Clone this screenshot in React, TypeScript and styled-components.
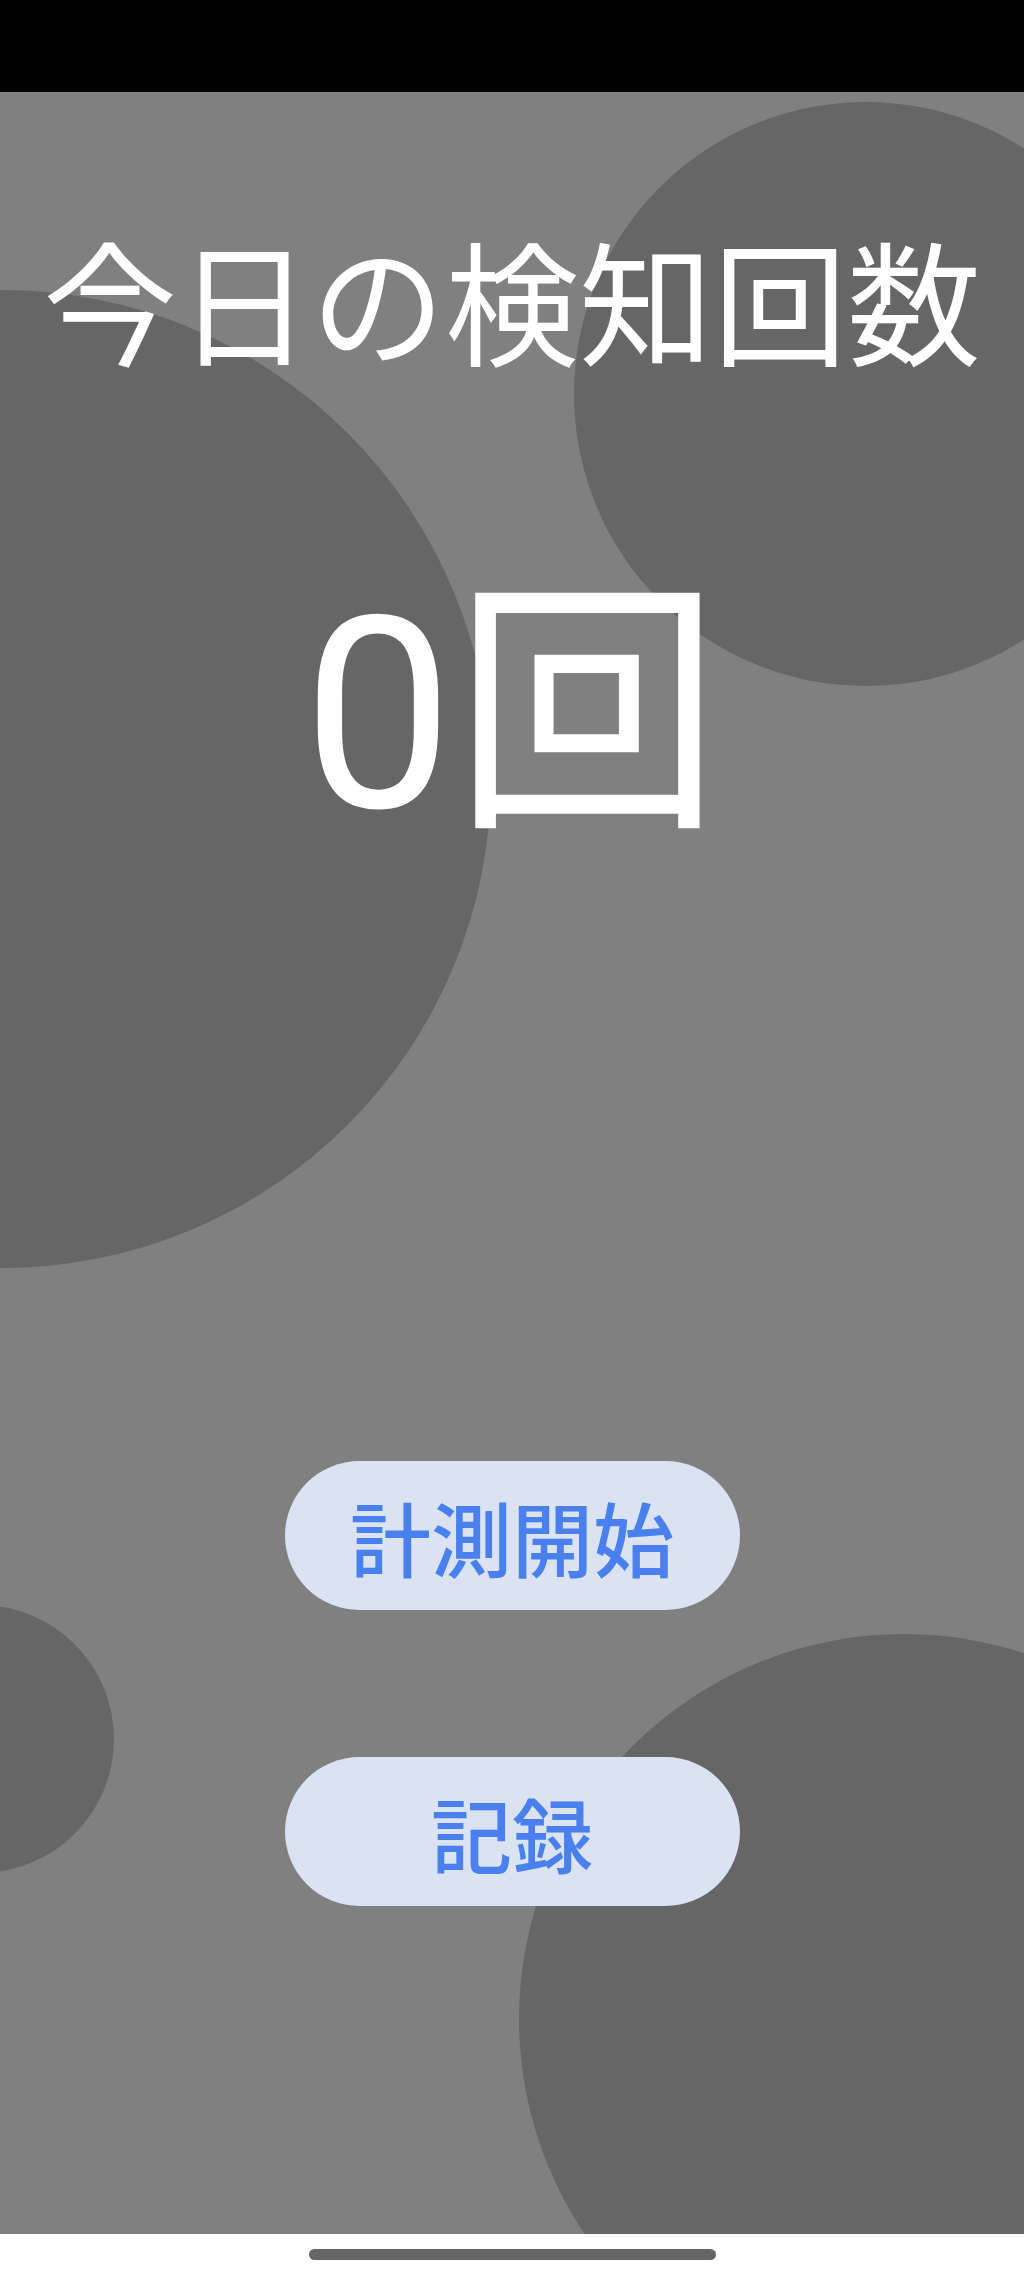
import React from 'react';
import styled, { createGlobalStyle } from 'styled-components';

const GlobalStyle = createGlobalStyle`
  html, body {
    margin: 0;
    padding: 0;
    background: #fff;
  }
  body {
    font-family: Roboto, "Noto Sans CJK JP", sans-serif;
  }
`;

const Page = styled.div`
  width: 1024px;
  height: 2276px;
  display: flex;
  flex-direction: column;
`;

const StatusBar = styled.div`
  height: 92px;
  flex-shrink: 0;
  background: #000;
`;

const Screen = styled.main`
  position: relative;
  height: 2142px;
  flex-shrink: 0;
  overflow: hidden;
  background: #808080;
  display: flex;
  flex-direction: column;
  align-items: center;
  padding-top: 139px;
  box-sizing: border-box;
`;

// decorative bubbles in the background
const Bubble = styled.div<{ $x: number; $y: number; $r: number }>`
  position: absolute;
  left: ${p => p.$x - p.$r}px;
  top: ${p => p.$y - p.$r}px;
  width: ${p => p.$r * 2}px;
  height: ${p => p.$r * 2}px;
  border-radius: 50%;
  background: #666666;
  z-index: 0;
`;

const Title = styled.h1`
  position: relative;
  z-index: 1;
  margin: 0;
  font-family: "Noto Sans CJK JP", sans-serif;
  font-weight: 400;
  font-size: 134px;
  line-height: 1;
  color: #fff;
  white-space: nowrap;
`;

const Count = styled.div`
  position: relative;
  z-index: 1;
  margin-top: 216px;
  font-family: Roboto, "Noto Sans CJK JP", sans-serif;
  font-weight: 400;
  font-size: 268px;
  line-height: 1;
  color: #fff;
  white-space: nowrap;
`;

const Actions = styled.div`
  position: relative;
  z-index: 1;
  margin-top: 612px;
  display: flex;
  flex-direction: column;
  gap: 147px;
`;

const PillButton = styled.button`
  width: 455px;
  height: 149px;
  border: none;
  border-radius: 75px;
  background: #dbe2f2;
  color: #4a80ee;
  font-family: "Noto Sans CJK JP", sans-serif;
  font-weight: 500;
  font-size: 81px;
  line-height: 1;
  padding: 0;
  cursor: pointer;
  display: flex;
  align-items: center;
  justify-content: center;
`;

const NavBar = styled.div`
  flex: 1;
  background: #fff;
  display: flex;
  justify-content: center;
  padding-top: 15px;
  box-sizing: border-box;
`;

const HomeIndicator = styled.div`
  width: 407px;
  height: 11px;
  border-radius: 6px;
  background: #666;
`;

const bubbles = [
  { x: 866, y: 302, r: 292 },
  { x: 2, y: 687, r: 489 },
  { x: -20, y: 1647, r: 134 },
  { x: 904, y: 1927, r: 385 },
];

export default function App() {
  const count = 0;
  return (
    <>
      <GlobalStyle />
      <Page>
        <StatusBar />
        <Screen>
          {bubbles.map((b, i) => (
            <Bubble key={i} $x={b.x} $y={b.y} $r={b.r} />
          ))}
          <Title>今日の検知回数</Title>
          <Count>{count}回</Count>
          <Actions>
            <PillButton>計測開始</PillButton>
            <PillButton>記録</PillButton>
          </Actions>
        </Screen>
        <NavBar>
          <HomeIndicator />
        </NavBar>
      </Page>
    </>
  );
}
